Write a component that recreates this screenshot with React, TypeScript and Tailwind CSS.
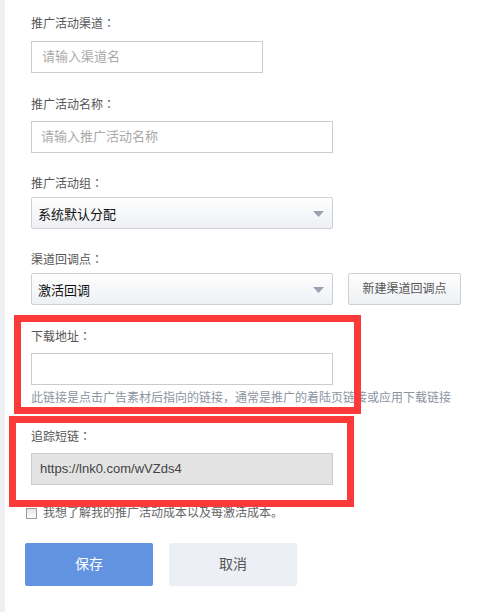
import React from "react";

const font = { fontFamily: '"Liberation Sans", "Noto Sans CJK SC", sans-serif' };

function Label({ text, className = "" }: { text: string; className?: string }) {
  return (
    <div className={`h-4 text-[12px] leading-4 text-[#555] ${className}`}>
      {text}
      <span style={{ fontFamily: '"Noto Sans CJK TC", sans-serif' }}>：</span>
    </div>
  );
}

function Arrow() {
  return (
    <svg width="11" height="7" viewBox="0 0 11 7" className="absolute right-[8px] top-[13px]">
      <polygon points="0,0 11,0 5.5,6" fill="#9aa2b1" />
    </svg>
  );
}

function Select({ text, className = "" }: { text: string; className?: string }) {
  return (
    <div
      className={`relative h-[32px] w-[302px] rounded-[2px] border border-[#cdd0d6] bg-gradient-to-b from-white to-[#eef0f4] pl-[6px] text-[13px] leading-[34px] text-[#111] ${className}`}
    >
      {text}
      <Arrow />
    </div>
  );
}

export default function App() {
  return (
    <div className="relative flex min-h-[612px] w-[493px] bg-white" style={font}>
      <div className="w-[5px] shrink-0 bg-[#eef0f4]" />
      <div className="flex flex-col pl-[26px]">
        <Label text="推广活动渠道" className="mt-[15px]" />
        <div className="mt-[10px] h-[32px] w-[232px] border border-[#cccccc] pl-[10px] text-[13px] leading-[30px] text-[#aaaaaa]">
          请输入渠道名
        </div>

        <Label text="推广活动名称" className="mt-[23px]" />
        <div className="mt-[9px] h-[32px] w-[302px] border border-[#cccccc] pl-[9px] text-[13px] leading-[30px] text-[#aaaaaa]">
          请输入推广活动名称
        </div>

        <Label text="推广活动组" className="mt-[22px]" />
        <Select text="系统默认分配" className="mt-[6px]" />

        <Label text="渠道回调点" className="mt-[22px]" />
        <div className="mt-[6px] flex gap-[15px]">
          <Select text="激活回调" />
          <div className="h-[32px] w-[113px] rounded-[2px] border border-[#cdd0d6] bg-gradient-to-b from-white to-[#eef0f4] text-center text-[12px] leading-[30px] text-[#555]">
            新建渠道回调点
          </div>
        </div>

        <Label text="下载地址" className="mt-[23px]" />
        <div className="mt-[9px] h-[32px] w-[302px] border border-[#cccccc]" />
        <div className="mt-[5px] h-4 whitespace-nowrap text-[12px] leading-4 text-[#8d94a1]">
          此链接是点击广告素材后指向的链接，通常是推广的着陆页链接或应用下载链接
        </div>

        <Label text="追踪短链" className="mt-[22px]" />
        <div className="mt-[9px] h-[32px] w-[302px] border border-[#cccccc] bg-[#e3e3e3] pl-[8px] text-[13px] leading-[30px] text-[#444]">
          https://lnk0.com/wVZds4
        </div>

        <div className="-ml-[5px] mt-[20px] flex h-4 items-center gap-[6px]">
          <div className="h-[11px] w-[11px] border border-[#9a9a9a] bg-gradient-to-b from-[#e6e6e6] to-white" />
          <span className="text-[12px] leading-4 text-[#666]">我想了解我的推广活动成本以及每激活成本。</span>
        </div>

        <div className="-ml-[6px] mt-[22px] flex gap-[16px]">
          <div className="h-[43px] w-[128px] rounded-[2px] bg-[#6293e0] text-center text-[14px] leading-[43px] text-white">
            保存
          </div>
          <div className="h-[43px] w-[128px] rounded-[2px] bg-[#eceff6] text-center text-[14px] leading-[43px] text-[#555]">
            取消
          </div>
        </div>
      </div>

      <div className="pointer-events-none absolute left-[14px] top-[315px] h-[99px] w-[347px] border-[7px] border-[#fc3a3a]" />
      <div className="pointer-events-none absolute left-[9px] top-[416px] h-[91px] w-[345px] border-[7px] border-[#fc3a3a]" />
    </div>
  );
}
